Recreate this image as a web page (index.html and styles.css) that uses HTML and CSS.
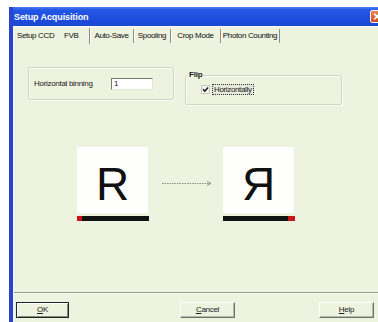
FILE: index.html
```html
<!DOCTYPE html>
<html>
<head>
<meta charset="utf-8">
<link rel="stylesheet" href="styles.css">
</head>
<body>
<div class="window">
  <div class="titlebar">
    <span class="title">Setup Acquisition</span>
    <span class="close"><svg width="12" height="11" viewBox="0 0 12 11"><path d="M3 2.5 L9 8.5 M9 2.5 L3 8.5" stroke="#fff" stroke-width="1.6"/></svg></span>
  </div>
  <div class="client">
    <div class="tabs">
      <span class="tab t1">Setup CCD</span>
      <span class="tab t2">FVB</span>
      <span class="tab t3">Auto-Save</span>
      <span class="tab t4">Spooling</span>
      <span class="tab t5">Crop Mode</span>
      <span class="tab t6">Photon Counting</span>
    </div>
    <div class="groups">
      <div class="group binning">
        <span class="label">Horizontal binning</span>
        <span class="input">1</span>
      </div>
      <fieldset class="group flip">
        <legend>Flip</legend>
        <div class="check-row">
          <span class="checkbox"><svg width="7" height="7" viewBox="0 0 7 7"><path d="M1 3.3 L2.8 5.2 L6 1.5" fill="none" stroke="#111" stroke-width="1.4"/></svg></span>
          <span class="check-label">Horizontally</span>
        </div>
      </fieldset>
    </div>
    <div class="diagram">
      <div class="figure">
        <div class="letter-box">R</div>
        <div class="bar bar-left"></div>
      </div>
      <div class="arrow">
        <svg width="50" height="7" viewBox="0 0 50 7"><line x1="0" y1="3.5" x2="48" y2="3.5" stroke="#8a8a8a" stroke-width="1" stroke-dasharray="1.5 1"/><path d="M45 1.5 L49 3.5 L45 5.5" fill="none" stroke="#777" stroke-width="0.8"/></svg>
      </div>
      <div class="figure">
        <div class="letter-box">Я</div>
        <div class="bar bar-right"></div>
      </div>
    </div>
    <div class="separator"></div>
    <div class="buttons">
      <span class="btn ok"><u>O</u>K</span>
      <span class="btn cancel"><u>C</u>ancel</span>
      <span class="btn help"><u>H</u>elp</span>
    </div>
  </div>
</div>
</body>
</html>
```
FILE: styles.css
```css
html, body {
  margin: 0;
  padding: 0;
  background: #ffffff;
  overflow: hidden;
  width: 378px;
  height: 322px;
}
body {
  font-family: "Liberation Sans", Arial, sans-serif;
  font-size: 8px;
  color: #1a1a1a;
}
.window {
  margin: 7px 0 0 9px;
  width: 372px;
  height: 330px;
  border-left: 4px solid #2a44cf;
  display: flex;
  flex-direction: column;
  background: #eef3e0;
}
.titlebar {
  height: 19px;
  flex: none;
  display: flex;
  align-items: center;
  background: linear-gradient(#4a7cf2 0, #2456e6 3px, #1a4ad9 14px, #2049d0 19px);
}
.title {
  color: #ffffff;
  font-weight: bold;
  font-size: 9px;
  padding-left: 1px;
  letter-spacing: -0.1px;
}
.close {
  margin-left: auto;
  margin-right: 1px;
  width: 14px;
  height: 13px;
  border-radius: 2px;
  background: linear-gradient(#e9825a, #d2461c);
  border: 1px solid #f4f4f4;
  box-sizing: border-box;
  display: flex;
}
.client {
  flex: 1;
  display: flex;
  flex-direction: column;
  border-top: 1px solid #f8faf0;
  border-left: 1px solid #f6f8ee;
}
.tabs {
  display: flex;
  height: 17px;
  align-items: center;
  padding-left: 1px;
}
.tab {
  height: 14px;
  line-height: 14px;
  text-align: center;
  letter-spacing: -0.35px;
  box-sizing: border-box;
  color: #111;
}
.t1 { width: 45px; text-align: left; padding-left: 2px; }
.t2 { width: 29px; text-align: left; padding-left: 4px; }
.t3, .t4, .t5, .t6 { border-left: 1px solid #8d8d85; box-shadow: inset 1px 0 0 #ffffff; }
.t6 { border-right: 1px solid #8d8d85; }
.t3 { width: 44px; height: 16px; line-height: 16px; }
.t4 { width: 37px; }
.t5 { width: 50px; }
.t6 { width: 60px; }
.groups {
  display: flex;
  align-items: flex-start;
  padding-left: 14px;
  margin-top: 23px;
}
.group {
  box-sizing: border-box;
  border: 1px solid #d2d6c4;
  box-shadow: inset 1px 1px 0 #fbfcf6, 1px 1px 0 #fbfcf6;
  border-radius: 2px;
}
.binning {
  width: 146px;
  height: 33px;
  display: flex;
  align-items: center;
  padding-left: 5px;
}
.label {
  letter-spacing: -0.3px;
  width: 77px;
}
.input {
  width: 42px;
  height: 12px;
  box-sizing: border-box;
  background: #ffffff;
  border-top: 1px solid #7a7a72;
  border-left: 1px solid #7a7a72;
  border-bottom: 1px solid #e8e8e0;
  border-right: 1px solid #e8e8e0;
  line-height: 10px;
  padding-left: 2px;
  font-size: 8px;
}
.flip {
  margin: 4px 0 0 11px;
  width: 157px;
  height: 34px;
  padding: 0;
}
.flip legend {
  font-weight: bold;
  font-size: 8px;
  padding: 0 1px;
  margin-left: 2px;
  line-height: 8px;
  letter-spacing: -0.2px;
}
.check-row {
  display: flex;
  align-items: center;
  padding-left: 15px;
  margin-top: 5px;
}
.checkbox {
  width: 9px;
  height: 9px;
  box-sizing: border-box;
  border: 1px solid #c9cabf;
  background: #f4f4ee;
  display: flex;
  align-items: center;
  justify-content: center;
}
.check-label {
  margin-left: 2px;
  padding: 0 1px;
  border: 1px dotted #333;
  background: #e6e9da;
  line-height: 9px;
  letter-spacing: -0.35px;
}
.diagram {
  display: flex;
  align-items: flex-start;
  margin-top: 42px;
  padding-left: 63px;
}
.figure {
  display: flex;
  flex-direction: column;
  width: 71px;
}
.letter-box {
  width: 71px;
  height: 66px;
  background: #fefefc;
  font-size: 46px;
  line-height: 66px;
  text-align: center;
  color: #111;
  font-family: "Liberation Sans", Arial, sans-serif;
  padding-top: 4px;
  box-sizing: border-box;
}
.bar {
  margin-top: 3px;
  height: 5px;
  width: 72px;
}
.bar-left { background: linear-gradient(to right, #c8151b 0, #c8151b 5px, #111 5px); }
.bar-right { background: linear-gradient(to right, #111 0, #111 65px, #c8151b 65px); }
.arrow {
  margin: 33px 11px 0 14px;
  width: 50px;
  height: 7px;
  display: flex;
}
.separator {
  margin-top: 71px;
  height: 1px;
  background: #96978a;
  border-bottom: 1px solid #fbfcf5;
}
.buttons {
  display: flex;
  margin-top: 8px;
}
.btn {
  height: 16px;
  box-sizing: border-box;
  line-height: 14px;
  text-align: center;
  letter-spacing: -0.3px;
  border-top: 1px solid #ffffff;
  border-left: 1px solid #ffffff;
  border-right: 1px solid #6f706a;
  border-bottom: 1px solid #6f706a;
  box-shadow: inset -1px -1px 0 #b7b8ad;
}
.ok {
  width: 53px;
  margin-left: 2px;
  border: 1px solid #222;
  box-shadow: inset 1px 1px 0 #fff, inset -1px -1px 0 #8a8a80;
}
.cancel {
  width: 55px;
  margin-left: 111px;
}
.help {
  width: 55px;
  margin-left: 84px;
}
```
